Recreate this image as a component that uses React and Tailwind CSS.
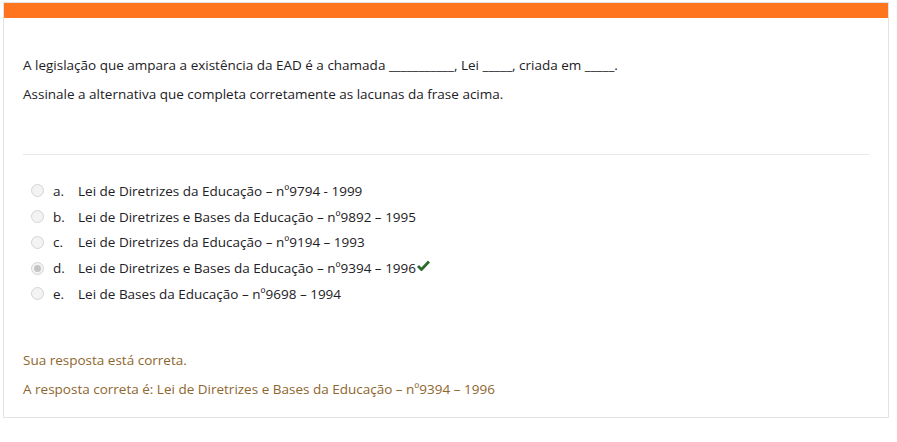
const OPTIONS = [
  { key: 'a', text: 'Lei de Diretrizes da Educação – nº9794 - 1999' },
  { key: 'b', text: 'Lei de Diretrizes e Bases da Educação – nº9892 – 1995' },
  { key: 'c', text: 'Lei de Diretrizes da Educação – nº9194 – 1993' },
  { key: 'd', text: 'Lei de Diretrizes e Bases da Educação – nº9394 – 1996', checked: true },
  { key: 'e', text: 'Lei de Bases da Educação – nº9698 – 1994' },
];

function Radio({ checked }) {
  return (
    <span className="w-[13px] h-[13px] rounded-full border border-[#d4d4d4] bg-[#f3f3f3] flex items-center justify-center shrink-0">
      {checked && <span className="w-[7px] h-[7px] rounded-full bg-[#c4c4c4]" />}
    </span>
  );
}

function Check() {
  return (
    <svg width="13" height="11" viewBox="0 0 13 11" className="ml-[1px] -mt-[6px]">
      <path d="M1 6 L4.5 9.5 L12 1.5" fill="none" stroke="#2f6b2f" strokeWidth="2.8" />
    </svg>
  );
}

export default function App() {
  return (
    <div
      className="pt-[2px] pl-[3px] bg-white text-[13.5px] text-[#1d2125]"
      style={{ fontFamily: '"Open Sans", "Noto Sans", sans-serif' }}
    >
      <div className="w-[886px] h-[416px] border border-[#e3e3e3] bg-white">
        <div className="h-[15px] bg-[#ff751e]" />
        <div className="px-[19px]">
          <div className="pt-[37px] leading-[20px]">
            <p className="mb-[9px]">
              A legislação que ampara a existência da EAD é a chamada ___________, Lei _____, criada em _____.
            </p>
            <p>Assinale a alternativa que completa corretamente as lacunas da frase acima.</p>
          </div>
          <div className="mt-[50px] border-t border-[#e8e8e8]" />
          <div className="pt-[23px]">
            {OPTIONS.map((o) => (
              <div key={o.key} className="flex items-center h-[25.75px] pl-[8px]">
                <Radio checked={o.checked} />
                <span className="ml-[9px] w-[25px]">{o.key}.</span>
                <span>{o.text}</span>
                {o.checked && <Check />}
              </div>
            ))}
          </div>
          <div className="pt-[43px] text-[#8e662e] leading-[20px]">
            <p className="mb-[9px]">Sua resposta está correta.</p>
            <p>A resposta correta é: Lei de Diretrizes e Bases da Educação – nº9394 – 1996</p>
          </div>
        </div>
      </div>
    </div>
  );
}
